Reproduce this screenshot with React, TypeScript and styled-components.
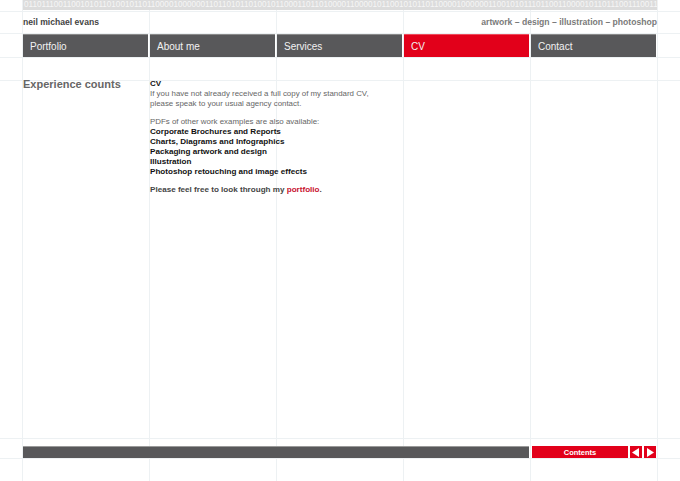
import React from 'react'
import styled, { createGlobalStyle } from 'styled-components'

const NAME = 'neil michael evans'
const binary = NAME.split('')
  .map((c) => c.charCodeAt(0).toString(2).padStart(8, '0'))
  .join('')

const navItems = ['Portfolio', 'About me', 'Services', 'CV', 'Contact']

const examples = [
  'Corporate Brochures and Reports',
  'Charts, Diagrams and Infographics',
  'Packaging artwork and design',
  'Illustration',
  'Photoshop retouching and image effects',
]

const GlobalStyle = createGlobalStyle`
  html, body {
    margin: 0;
    padding: 0;
    background: #fff;
  }
  body {
    font-family: 'Liberation Sans', Arial, Helvetica, sans-serif;
  }
`

const guide = '#edf1f3'

const Page = styled.div`
  width: 680px;
  height: 481px;
  box-sizing: border-box;
  padding: 0 23px 23px 23px;
  display: flex;
  flex-direction: column;
  overflow: hidden;
  background-color: #fff;
  background-image:
    linear-gradient(${guide}, ${guide}),
    linear-gradient(${guide}, ${guide}),
    linear-gradient(${guide}, ${guide}),
    linear-gradient(${guide}, ${guide}),
    linear-gradient(${guide}, ${guide}),
    linear-gradient(${guide}, ${guide}),
    linear-gradient(to right, ${guide} 1px, transparent 1px);
  background-size:
    100% 1px, 100% 1px, 100% 1px, 100% 1px, 100% 1px, 100% 1px,
    127px 100%;
  background-position:
    0 11px, 0 33px, 0 57px, 0 80px, 0 438px, 0 458px,
    22px 0;
  background-repeat: no-repeat, no-repeat, no-repeat, no-repeat, no-repeat, no-repeat, repeat-x;
`

const BinaryStrip = styled.div`
  height: 10px;
  background: #dcdcdc;
  color: #f6f6f6;
  font-size: 8.15px;
  line-height: 10px;
  padding-left: 1px;
  white-space: nowrap;
  overflow: hidden;
`

const Masthead = styled.div`
  height: 24px;
  display: flex;
  align-items: center;
  justify-content: space-between;
  font-size: 8.6px;
  font-weight: 700;
`

const Name = styled.span`
  color: #444;
`

const Tagline = styled.span`
  color: #7a7a7a;
`

const Nav = styled.nav`
  display: grid;
  grid-template-columns: repeat(5, 125px);
  column-gap: 2px;
  height: 23px;
`

const NavItem = styled.a<{ $active?: boolean }>`
  display: flex;
  align-items: center;
  padding-left: 7px;
  background: ${(p) => (p.$active ? '#e2001a' : '#58585a')};
  border-top: 1px solid ${(p) => (p.$active ? '#ee4a5a' : '#8a8a8a')};
  color: #f2f2f2;
  font-size: 10px;
  text-decoration: none;
`

const Content = styled.main`
  flex: 1;
  display: grid;
  grid-template-columns: 127px 254px;
  align-items: start;
  padding-top: 22px;
`

const Heading = styled.h1`
  margin: -2px 0 0 0;
  font-size: 11px;
  font-weight: 700;
  color: #666;
  line-height: 14px;
`

const Body = styled.div`
  font-size: 7.9px;
  line-height: 10px;
  color: #666;
`

const Title = styled.div`
  font-weight: 700;
  color: #111;
  font-size: 8px;
`

const Para = styled.p`
  margin: 0 0 8px 0;
`

const Strong = styled.div`
  font-weight: 700;
  color: #111;
  font-size: 8.1px;
`

const Closing = styled.p`
  margin: 0;
  font-weight: 700;
  font-size: 8.1px;
  color: #444;
`

const Link = styled.a`
  color: #c8102e;
  text-decoration: none;
`

const Footer = styled.footer`
  display: grid;
  grid-template-columns: 506px 97px 12px 12px;
  column-gap: 2px;
  height: 12px;
  align-items: stretch;
`

const FooterBar = styled.div`
  background: #58585a;
  border-top: 1px solid #9a9a9a;
`

const ContentsButton = styled.a`
  margin-left: 1px;
  background: #e2001a;
  color: #fff;
  font-size: 7.5px;
  font-weight: 700;
  display: flex;
  align-items: center;
  justify-content: center;
  text-decoration: none;
`

const Arrow = styled.a`
  background: #e2001a;
  display: flex;
  align-items: center;
  justify-content: center;
`

const App: React.FC = () => {
  return (
    <>
      <GlobalStyle />
      <Page>
        <BinaryStrip>{binary}</BinaryStrip>
        <Masthead>
          <Name>neil michael evans</Name>
          <Tagline>artwork – design – illustration – photoshop</Tagline>
        </Masthead>
        <Nav>
          {navItems.map((item) => (
            <NavItem key={item} $active={item === 'CV'}>
              {item}
            </NavItem>
          ))}
        </Nav>
        <Content>
          <Heading>Experience counts</Heading>
          <Body>
            <Title>CV</Title>
            <Para>
              If you have not already received a full copy of my standard CV,
              <br />
              please speak to your usual agency contact.
            </Para>
            <Para>
              PDFs of other work examples are also available:
              {examples.map((e) => (
                <Strong key={e}>{e}</Strong>
              ))}
            </Para>
            <Closing>
              Please feel free to look through my <Link>portfolio</Link>.
            </Closing>
          </Body>
        </Content>
        <Footer>
          <FooterBar />
          <ContentsButton>Contents</ContentsButton>
          <Arrow>
            <svg width="8" height="9" viewBox="0 0 8 9">
              <polygon points="7,0 7,9 0,4.5" fill="#fff" />
            </svg>
          </Arrow>
          <Arrow>
            <svg width="8" height="9" viewBox="0 0 8 9">
              <polygon points="1,0 1,9 8,4.5" fill="#fff" />
            </svg>
          </Arrow>
        </Footer>
      </Page>
    </>
  )
}

export default App
